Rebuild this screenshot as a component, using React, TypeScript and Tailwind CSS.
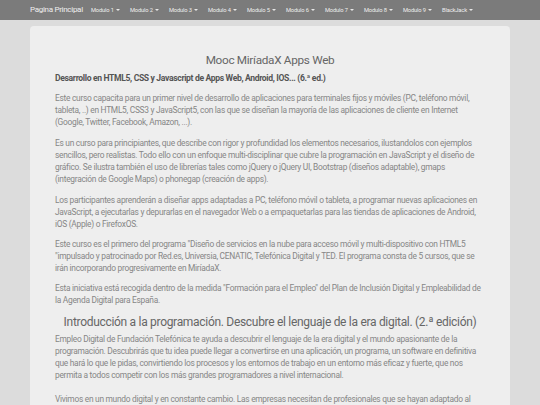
const modulos = ['Modulo 1', 'Modulo 2', 'Modulo 3', 'Modulo 4', 'Modulo 5', 'Modulo 6', 'Modulo 7', 'Modulo 8', 'Modulo 9', 'BlackJack'];

const font = { fontFamily: 'Roboto, "Noto Sans", sans-serif' };

function Caret() {
  return <span className="ml-[2px] inline-block border-x-[2px] border-t-[2.5px] border-x-transparent border-t-[#e8e8e8] align-middle" />;
}

export default function App() {
  return (
    <div className="h-[405px] overflow-hidden bg-[#dcdcdc]" style={font}>
      {/* barra de navegación */}
      <nav className="flex h-[20px] items-center whitespace-nowrap bg-[#7b7b7b] pl-[30px] text-[#eeeeee]">
        <span className="w-[61px] text-[8px] tracking-[-0.3px]">Pagina Principal</span>
        {modulos.map((m) => (
          <span key={m} className="flex w-[39px] items-center text-[5.75px] tracking-[-0.15px]">
            {m}
            <Caret />
          </span>
        ))}
      </nav>

      <main className="mx-[30px] mt-[6px] rounded-t-[4px] bg-[#eeeeee] px-[25px] pb-4 pt-[25px] text-[8.4px] leading-[12px] tracking-[-0.28px] text-[#868686]">
        <h1 className="text-center text-[11.75px] leading-[18px] tracking-[-0.3px] text-[#666]">Mooc MiríadaX Apps Web</h1>
        <h4 className="mt-[3px] text-[8.6px] font-bold tracking-[-0.35px] text-[#555]">
          Desarrollo en HTML5, CSS y Javascript de Apps Web, Android, IOS... (6.ª ed.)
        </h4>
        <p className="mt-[8px]">
          Este curso capacita para un primer nivel de desarrollo de aplicaciones para terminales fijos y móviles (PC, teléfono móvil, tableta, ..) en HTML5, CSS3 y JavaScript5, con las que se diseñan la mayoría de las aplicaciones de cliente en Internet (Google, Twitter, Facebook, Amazon, ...).
        </p>
        <p className="mt-[9px]">
          Es un curso para principiantes, que describe con rigor y profundidad los elementos necesarios, ilustandolos con ejemplos sencillos, pero realistas. Todo ello con un enfoque multi-disciplinar que cubre la programación en JavaScript y el diseño de gráfico. Se ilustra también el uso de librerías tales como jQuery o jQuery UI, Bootstrap (diseños adaptable), gmaps (integración de Google Maps) o phonegap (creación de apps).
        </p>
        <p className="mt-[8.5px]">
          Los participantes aprenderán a diseñar apps adaptadas a PC, teléfono móvil o tableta, a programar nuevas aplicaciones en JavaScript, a ejecutarlas y depurarlas en el navegador Web o a empaquetarlas para las tiendas de aplicaciones de Android, iOS (Apple) o FirefoxOS.
        </p>
        <p className="mt-[8px]">
          Este curso es el primero del programa "Diseño de servicios en la nube para acceso móvil y multi-dispositivo con HTML5 "impulsado y patrocinado por Red.es, Universia, CENATIC, Telefónica Digital y TED. El programa consta de 5 cursos, que se irán incorporando progresivamente en MiríadaX.
        </p>
        <p className="mt-[8px]">
          Esta iniciativa está recogida dentro de la medida "Formación para el Empleo" del Plan de Inclusión Digital y Empleabilidad de la Agenda Digital para España.
        </p>
        <h2 className="mt-[7px] text-center text-[12px] leading-[18px] tracking-[-0.3px] text-[#666]">
          Introducción a la programación. Descubre el lenguaje de la era digital. (2.ª edición)
        </h2>
        <p className="mt-[2px]">
          Empleo Digital de Fundación Telefónica te ayuda a descubrir el lenguaje de la era digital y el mundo apasionante de la programación. Descubrirás que tu idea puede llegar a convertirse en una aplicación, un programa, un software en definitiva que hará lo que le pidas, convirtiendo los procesos y los entornos de trabajo en un entorno más eficaz y fuerte, que nos permita a todos competir con los más grandes programadores a nivel internacional.
        </p>
        <p className="mt-[12px]">
          Vivimos en un mundo digital y en constante cambio. Las empresas necesitan de profesionales que se hayan adaptado al entorno digital y que sean capaces de dar respuesta a las nuevas necesidades.
        </p>
      </main>
    </div>
  );
}
